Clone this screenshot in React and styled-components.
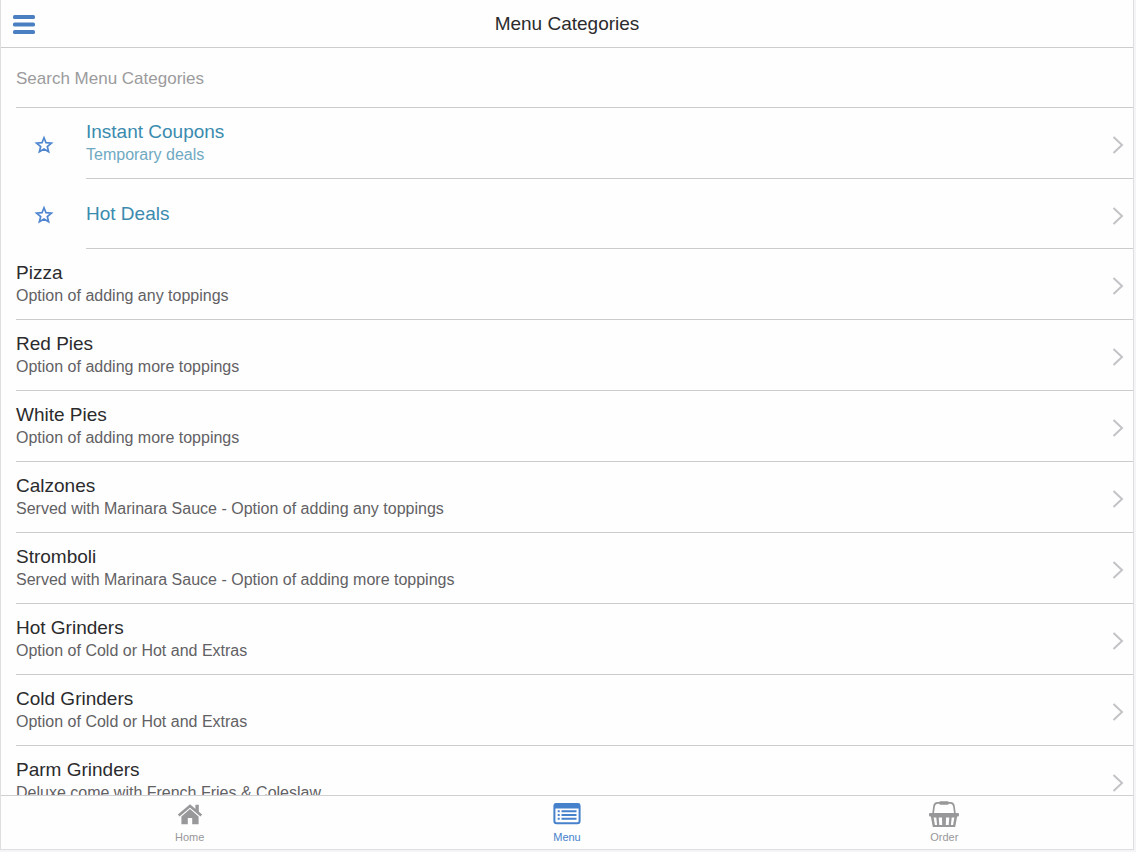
import { useState } from "react";
import styled, { createGlobalStyle } from "styled-components";

const GlobalStyle = createGlobalStyle`
  * {
    box-sizing: border-box;
  }

  body {
    margin: 0;
    background: #f5f4f6;
    font-family: "Liberation Sans", Arial, Helvetica, sans-serif;
  }
`;

const Screen = styled.div`
  display: flex;
  flex-direction: column;
  height: 100vh;
  padding: 0 2px 2px 0;
`;

const Frame = styled.div`
  display: flex;
  flex: 1;
  flex-direction: column;
  min-height: 0;
  border: solid #dedde0;
  border-width: 0 1px 1px;
  background: #fefefe;
`;

const Header = styled.header`
  display: grid;
  grid-template-columns: 48px 1fr 48px;
  align-items: center;
  height: 48px;
  flex-shrink: 0;
  border-bottom: 1px solid #cdcccf;
`;

const MenuButton = styled.button`
  display: flex;
  padding: 2px 11px 0;
  border: 0;
  background: none;
  color: #4a7fc1;
  cursor: pointer;
`;

const Title = styled.h1`
  margin: 0;
  color: #2b2b2d;
  font-size: 19px;
  font-weight: 400;
  line-height: 23px;
  text-align: center;
`;

const Content = styled.main`
  flex: 1;
  min-height: 0;
  padding-left: 15px;
  overflow-y: auto;
  scrollbar-width: none;
`;

const SearchInput = styled.input`
  display: block;
  width: 100%;
  height: 60px;
  padding: 2px 0 0;
  border: 0;
  border-bottom: 1px solid #cccbce;
  outline: 0;
  background: transparent;
  color: #2b2b2d;
  font-family: inherit;
  font-size: 17px;

  &::placeholder {
    color: #9b9b9d;
    opacity: 1;
  }
`;

const List = styled.ul`
  margin: 0;
  padding: 0;
  list-style: none;
`;

const Row = styled.a`
  display: flex;
  color: #2b2b2d;
  text-decoration: none;
`;

const RowIcon = styled.span`
  display: flex;
  flex: 0 0 70px;
  align-items: center;
  padding: 2px 0 0 18px;
  color: #4f86cf;
`;

const RowBody = styled.span`
  display: flex;
  flex: 1;
  align-items: center;
  justify-content: space-between;
  min-height: 70px;
  padding: 12px 9px 12px 0;
  border-bottom: 1px solid #cccbce;
`;

const RowTitle = styled.span`
  display: block;
  color: ${(props) => (props.$deal ? "#3b8bae" : "#2b2b2d")};
  font-size: 19px;
  line-height: 23px;
`;

const RowNote = styled.span`
  display: block;
  color: ${(props) => (props.$deal ? "#6fa9c2" : "#626164")};
  font-size: 16px;
  line-height: 23px;
`;

const RowArrow = styled.span`
  display: flex;
  padding-top: 4px;
  color: #c3c2c6;
`;

const TabBar = styled.nav`
  display: grid;
  grid-template-columns: repeat(3, 1fr);
  flex-shrink: 0;
  height: 54px;
  border-top: 1px solid #d0cfd2;
`;

const Tab = styled.a`
  display: flex;
  flex-direction: column;
  align-items: center;
  padding-top: 4px;
  color: ${(props) => (props.$active ? "#4681cb" : "#98979a")};
  font-size: 11px;
  line-height: 15px;
  text-decoration: none;

  svg {
    height: 30px;
  }
`;

const BarsIcon = () => (
  <svg width="24" height="22" viewBox="0 0 24 22" fill="currentColor" aria-hidden="true">
    <rect x="1" y="1" width="22" height="4" rx="1.6" />
    <rect x="1" y="8.5" width="22" height="4" rx="1.6" />
    <rect x="1" y="16" width="22" height="4" rx="1.6" />
  </svg>
);

const StarIcon = () => (
  <svg width="20" height="20" viewBox="0 0 20 20" fill="none" stroke="currentColor" strokeWidth="1.7" aria-hidden="true">
    <path d="M10 2.8l2 4.9 5.400.4-4.100 3.400 1.300 5.200-4.600-2.800-4.600 2.800 1.300-5.200-4.100-3.400 5.400-.4z" />
  </svg>
);

const ChevronIcon = () => (
  <svg width="12" height="20" viewBox="0 0 12 20" fill="none" stroke="currentColor" strokeWidth="2" aria-hidden="true">
    <path d="M1.5 2l8.5 8-8.5 8" />
  </svg>
);

const HomeIcon = () => (
  <svg width="26" height="30" viewBox="0 0 26 30" aria-hidden="true">
    <path
      d="M1.7 15.600L13 6l11.300 9.600"
      fill="none"
      stroke="currentColor"
      strokeWidth="2.6"
    />
    <path d="M18.4 4.8h3.400v9l-3.400-3zM13 9.100l8.600 7.300v7.800h-6.400v-6.200h-4.400v6.200H4.400v-7.800z" fill="currentColor" />
  </svg>
);

const MenuIcon = () => (
  <svg width="28" height="30" viewBox="0 0 28 30" aria-hidden="true">
    <rect x="1.4" y="3.9" width="25.2" height="19.400" rx="2.2" fill="none" stroke="currentColor" strokeWidth="2" />
    <path
      d="M1.500 3.500h25v5h-25zM4.700 10.200h2v2h-2zM4.700 14h2v2h-2zM4.700 17.800h2v2h-2zM8.500 10.200h15v2h-15zM8.500 14h15v2h-15zM8.500 17.800h15v2h-15z"
      fill="currentColor"
    />
  </svg>
);

const BasketIcon = () => (
  <svg width="32" height="30" viewBox="0 0 32 30" aria-hidden="true">
    <path
      d="M5 14l1.100-8Q6.600 3 9.500 2.800h13Q25.400 3 25.900 6L27 14"
      fill="none"
      stroke="currentColor"
      strokeWidth="1.7"
    />
    <path d="M12.500 1.300h7q1.200 0 1.200 1v1.400q0 1-1.200 1h-7q-1.200 0-1.200-1V2.300q0-1 1.200-1z" fill="currentColor" />
    <path
      fillRule="evenodd"
      d="M2 12.900h28q1 0 1 1v1.500q0 1-1 1h-.9L27.200 27H4.800L2.900 16.400H2q-1 0-1-1v-1.500q0-1 1-1zM5.600 17.400l1.300 7.600h2.200l-.8-7.600zM10.700 17.400l.6 7.600h2.900l-.2-7.600zM18 17.400l-.2 7.600h2.900l.6-7.600zM23.700 17.400l-.8 7.600h2.200l1.300-7.600z"
      fill="currentColor"
    />
  </svg>
);

const deals = [
  { title: "Instant Coupons", note: "Temporary deals" },
  { title: "Hot Deals" },
];

const categories = [
  { title: "Pizza", note: "Option of adding any toppings" },
  { title: "Red Pies", note: "Option of adding more toppings" },
  { title: "White Pies", note: "Option of adding more toppings" },
  { title: "Calzones", note: "Served with Marinara Sauce - Option of adding any toppings" },
  { title: "Stromboli", note: "Served with Marinara Sauce - Option of adding more toppings" },
  { title: "Hot Grinders", note: "Option of Cold or Hot and Extras" },
  { title: "Cold Grinders", note: "Option of Cold or Hot and Extras" },
  { title: "Parm Grinders", note: "Deluxe come with French Fries & Coleslaw" },
];

const tabs = [
  { label: "Home", Icon: HomeIcon },
  { label: "Menu", Icon: MenuIcon },
  { label: "Order", Icon: BasketIcon },
];

const MenuRow = ({ item, deal }) => (
  <li>
    <Row href="#">
      {deal && (
        <RowIcon>
          <StarIcon />
        </RowIcon>
      )}
      <RowBody>
        <span>
          <RowTitle $deal={deal}>{item.title}</RowTitle>
          {item.note && <RowNote $deal={deal}>{item.note}</RowNote>}
        </span>
        <RowArrow>
          <ChevronIcon />
        </RowArrow>
      </RowBody>
    </Row>
  </li>
);

export default function App() {
  const [search, setSearch] = useState("");

  // Deals stay on top, the search only narrows the categories
  const shown = categories.filter((item) =>
    item.title.toLowerCase().includes(search.toLowerCase())
  );

  return (
    <Screen>
      <GlobalStyle />
      <Frame>
        <Header>
          <MenuButton type="button" aria-label="Open menu">
            <BarsIcon />
          </MenuButton>
          <Title>Menu Categories</Title>
        </Header>
        <Content>
          <SearchInput
            type="text"
            aria-label="Search Menu Categories"
            placeholder="Search Menu Categories"
            value={search}
            onChange={(e) => setSearch(e.target.value)}
          />
          <List>
            {deals.map((item) => (
              <MenuRow key={item.title} item={item} deal />
            ))}
            {shown.map((item) => (
              <MenuRow key={item.title} item={item} />
            ))}
          </List>
        </Content>
        <TabBar>
          {tabs.map(({ label, Icon }) => (
            <Tab key={label} href="#" $active={label === "Menu"}>
              <Icon />
              {label}
            </Tab>
          ))}
        </TabBar>
      </Frame>
    </Screen>
  );
}
